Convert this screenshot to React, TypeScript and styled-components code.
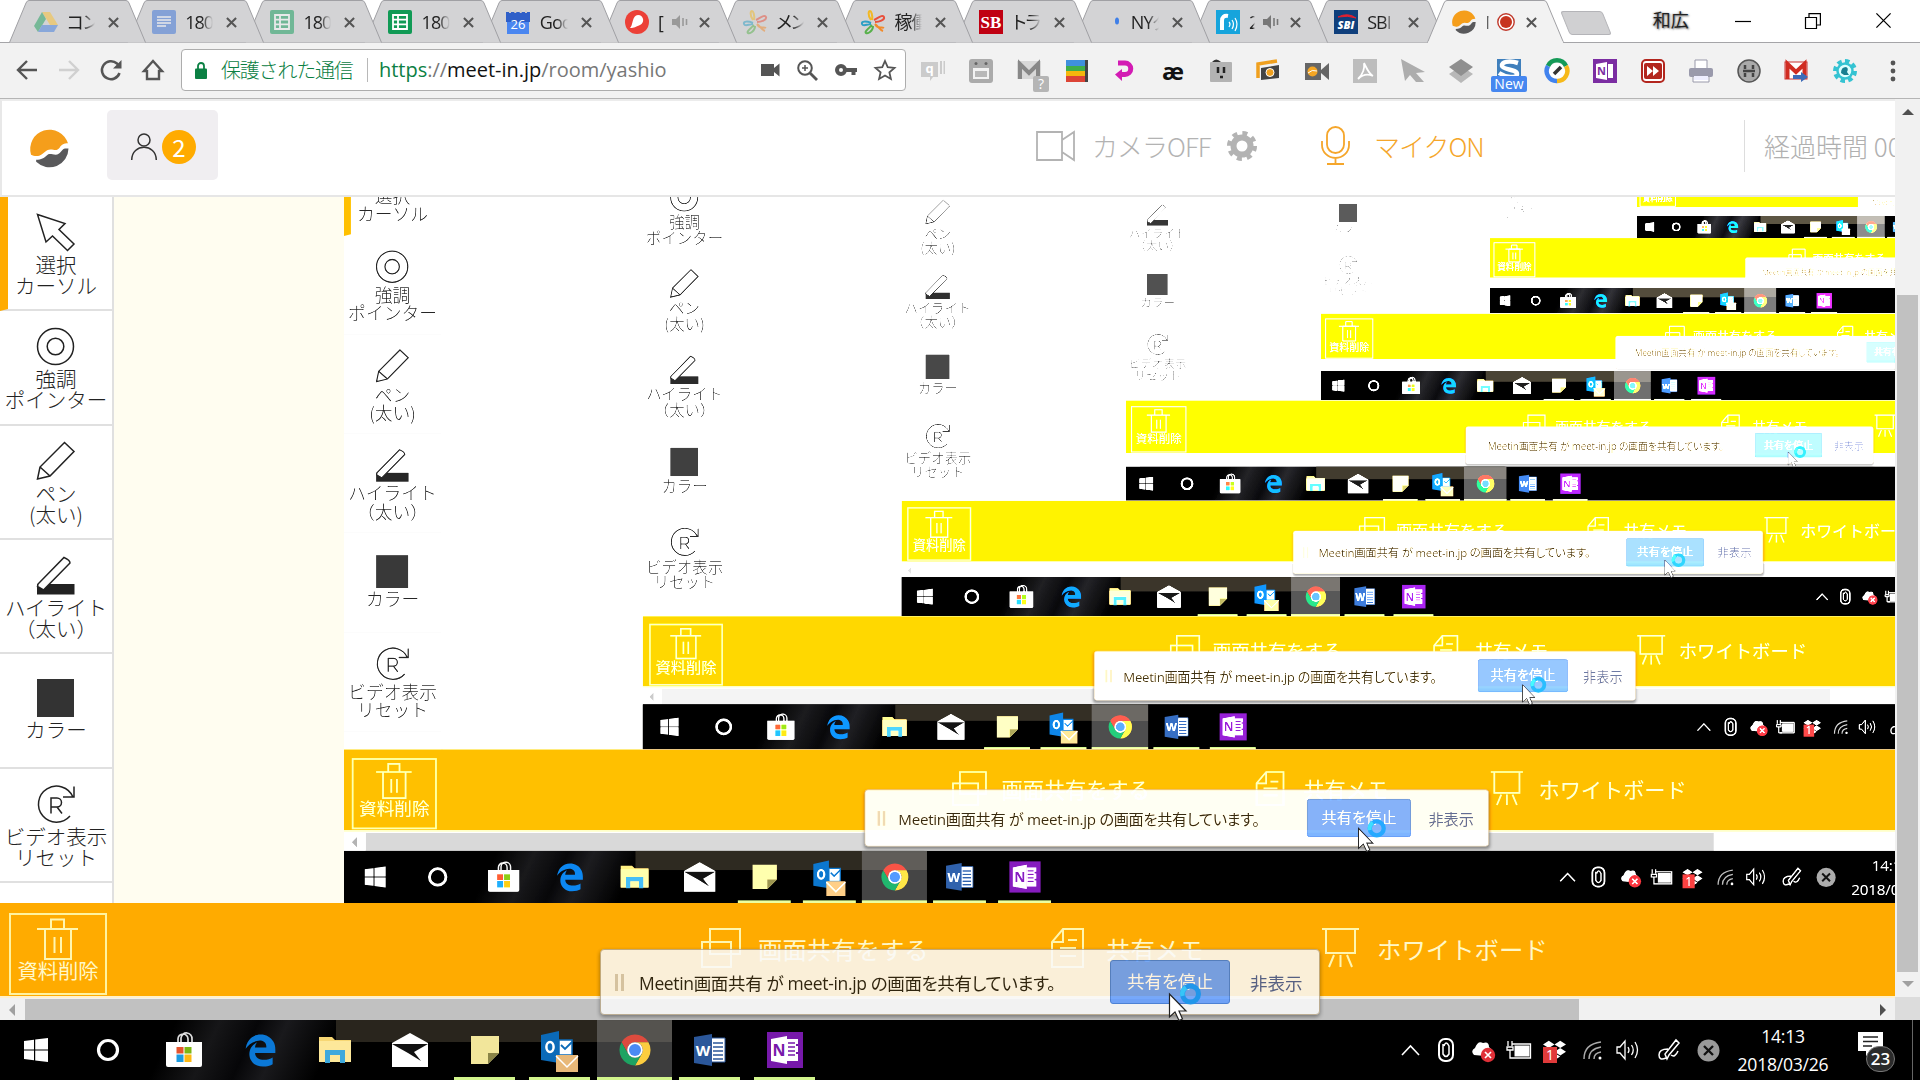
import React from "react";
import styled, { createGlobalStyle, css } from "styled-components";
import { FaEdgeLegacy, FaDropbox } from "react-icons/fa";

const JP = `"Noto Sans CJK JP", "Noto Sans", sans-serif`;
const UI = `"Open Sans", "Noto Sans CJK JP", sans-serif`;
const DEPTH = 7;
const SCALE = 0.8675;

const Global = createGlobalStyle`
  *, *::before, *::after { box-sizing: border-box; }
  html, body { margin: 0; padding: 0; background: #fff; overflow: hidden; }
  svg { display: block; flex: none; overflow: visible; }
`;

const Desktop = styled.div`
  position: relative;
  isolation: isolate;
  width: 1920px;
  height: 1080px;
  overflow: hidden;
  display: flex;
  flex-direction: column;
  background: #fff;
  font-family: ${JP};
  color: #222;
`;

/* ---------- browser tabs ---------- */
const TabStrip = styled.div`
  display: flex;
  height: 43px;
  padding-left: 9px;
  background: #fff;
  flex: none;
  border-bottom: 1px solid #a5a5a8;
`;
const TabBox = styled.div<{ $z: number }>`
  position: relative;
  z-index: ${(p) => p.$z};
  width: 137px;
  height: 43px;
  margin-right: -18.8px;
  flex: none;
  display: flex;
  align-items: center;
  padding: 1px 18px 0 24px;
`;
const TabShape = styled.svg`
  position: absolute;
  inset: 0;
  z-index: -1;
`;
const TabIcon = styled.div<{ $faded?: boolean }>`
  width: 25px;
  height: 24px;
  display: flex;
  justify-content: center;
  opacity: ${(p) => (p.$faded ? 0.5 : 1)};
`;
const TabTitle = styled.div<{ $w?: number }>`
  width: ${(p) => p.$w ?? 28}px;
  margin-left: 9px;
  overflow: hidden;
  white-space: nowrap;
  font: 18px/26px ${UI};
  letter-spacing: -1px;
  font-feature-settings: "palt";
  color: #222;
  mask-image: linear-gradient(90deg, #000 60%, transparent);
`;
const TabEnd = styled.div`
  margin-left: auto;
  display: flex;
  align-items: center;
  gap: 11px;
  padding-right: 9px;
`;
const NewTab = styled.div`
  width: 42px;
  height: 24px;
  margin: 11px 0 0 19px;
  background: #d0d0d2;
  border: 1px solid #b4b4b8;
  border-radius: 3px;
  transform: skewX(22deg);
`;
const Account = styled.div`
  margin-left: 46px;
  width: 38px;
  font: 18px/38px ${JP};
  color: #222;
  text-shadow: 1px 1px 2px #777, -1px 0 2px #aaa;
`;
const WindowButtons = styled.div`
  display: flex;
  align-items: center;
  gap: 54px;
  margin-left: 44px;
  height: 41px;
`;

/* ---------- browser toolbar ---------- */
const Toolbar = styled.div`
  display: flex;
  align-items: center;
  height: 56px;
  flex: none;
  background: #f2f2f2;
  border-bottom: 1px solid #b5b5b5;
`;
const NavGroup = styled.div`
  width: 181px;
  padding: 0 17px 2px 16px;
  display: flex;
  gap: 20px;
`;
const Omnibox = styled.div`
  width: 725px;
  height: 42px;
  margin-top: -1px;
  background: #fff;
  border: 1px solid #adadad;
  border-radius: 4px;
  display: flex;
  align-items: center;
  padding-left: 13px;
  font: 20px/38px ${UI};
`;
const Secure = styled.span`
  margin-left: 14px;
  width: 132px;
  font-family: ${JP};
  font-weight: 300;
  letter-spacing: -1.2px;
  font-size: 20px;
  white-space: nowrap;
  color: #0b8043;
`;
const Divider = styled.i`
  width: 1px;
  height: 24px;
  margin: 0 11px 0 14px;
  background: #b8b8b8;
`;
const Url = styled.span`
  width: 382px;
  flex: none;
  color: #777;
  white-space: nowrap;
  letter-spacing: -0.02px;
  b { font-weight: 400; color: #111; }
  em { font-style: normal; color: #0b8043; }
`;
const BoxIcons = styled.div`
  display: flex;
  align-items: center;
  gap: 17px;
`;
const Extensions = styled.div`
  display: flex;
  margin-left: 3px;
`;
const Ext = styled.div`
  width: 48px;
  height: 54px;
  display: flex;
  align-items: center;
  justify-content: center;
  position: relative;
`;
const Glyph = styled.span<{ $c?: string; $s?: number }>`
  font: 700 ${(p) => p.$s ?? 20}px/24px ${UI};
  color: ${(p) => p.$c ?? "#111"};
`;
const ExtBadge = styled.span<{ $bg: string; $wide?: boolean }>`
  position: absolute;
  left: ${(p) => (p.$wide ? 6 : 28)}px;
  top: 32px;
  width: ${(p) => (p.$wide ? 36 : 16)}px;
  height: 16px;
  border-radius: 2px;
  background: ${(p) => p.$bg};
  color: #fff;
  font: 14px/16px ${UI};
  text-align: center;
`;

/* ---------- page ---------- */
const Viewport = styled.div`
  display: flex;
  flex: none;
  height: 921px;
`;
const Page = styled.div`
  width: 1895px;
  flex: none;
  display: flex;
  flex-direction: column;
  overflow: hidden;
`;
const Header = styled.header`
  height: 98px;
  flex: none;
  display: flex;
  align-items: center;
  border-top: 2px solid #ececec;
  border-left: 2px solid #e8e8e8;
  border-bottom: 2px solid #e6e6e6;
  padding-left: 28px;
  white-space: nowrap;
`;
const Members = styled.div`
  width: 111px;
  height: 70px;
  flex: none;
  margin: -6px 0 0 38px;
  background: #f0eef1;
  border-radius: 5px;
  display: flex;
  align-items: center;
  padding: 4px 0 0 24px;
  gap: 5px;
`;
const Count = styled.span`
  width: 34px;
  height: 34px;
  border-radius: 50%;
  background: #ffab00;
  color: #fff;
  text-align: center;
  font: 24px/33px ${JP};
`;
const Status = styled.div`
  display: flex;
  flex: none;
  align-items: center;
  height: 60px;
  margin: -5px 0 0 818px;
`;
const HeaderText = styled.span<{ $c: string; $w: number; $ml: number; $ls?: number }>`
  margin-left: ${(p) => p.$ml}px;
  width: ${(p) => p.$w}px;
  flex: none;
  font: 300 26px/36px ${JP};
  letter-spacing: ${(p) => p.$ls ?? -1}px;
  color: ${(p) => p.$c};
`;
const MicIcon = styled.span`
  margin-left: 64px;
`;
const HeaderRule = styled.i`
  width: 1px;
  height: 52px;
  margin-left: 261px;
  background: #ddd;
`;
const AboveFold = styled.div<{ $h: number }>`
  height: ${(p) => p.$h}px;
  flex: none;
`;

const Workspace = styled.div`
  display: flex;
  height: 706px;
  flex: none;
`;
const Tools = styled.nav`
  width: 114px;
  flex: none;
  border-right: 2px solid #e0e0e0;
  background: #fff;
`;
const ToolCell = styled.div<{ $active?: boolean; $low?: boolean }>`
  height: 114.35px;
  border-bottom: 2px solid #e0e0e0;
  border-left: ${(p) => (p.$active ? "8px solid #ffab00" : "0 solid")};
  padding: ${(p) => (p.$low ? 25 : 16.5)}px ${(p) => (p.$active ? 8 : 0)}px 0 0;
  display: flex;
  flex-direction: column;
  align-items: center;
  font: 300 20.5px/21px ${JP};
  white-space: pre;
  text-align: center;
  span { margin-top: ${(p) => (p.$low ? 2 : 3)}px; }
`;
const Board = styled.div`
  width: 230px;
  flex: none;
  background: #fffdf0;
`;
const SharedVideo = styled.div`
  flex: 1;
  min-width: 0;
  overflow: hidden;
  background: #fff;
`;
const Mirror = styled.div<{ $soft: boolean }>`
  width: 1920px;
  height: 1080px;
  transform-origin: 0 0;
  transform: translateY(-230.9px) scale(${SCALE});
  filter: ${(p) => (p.$soft ? "blur(0.7px) " : "")}brightness(1.125);
`;

const ActionBar = styled.footer`
  height: 95px;
  flex: none;
  display: flex;
  background: #ffab00;
  border-bottom: 2px solid #fff1cc;
  color: #fff8c8;
  padding-left: 9px;
`;
const DeleteBox = styled.div`
  width: 98px;
  height: 82px;
  margin-top: 10px;
  border: 2px solid #fff3a0;
  display: flex;
  flex-direction: column;
  align-items: center;
  padding-top: 3px;
  font: 20.3px/20px ${JP};
`;
const Action = styled.div<{ $ml: number; $gap: number; $w: number }>`
  display: flex;
  margin-left: ${(p) => p.$ml}px;
  width: ${(p) => p.$w}px;
  flex: none;
  gap: ${(p) => p.$gap}px;
  padding-top: 25px;
  font: 24.4px/42px ${JP};
  white-space: nowrap;
`;

const HScroll = styled.div`
  height: 22px;
  flex: none;
  background: #f1f1f1;
  display: flex;
  align-items: center;
  padding: 1px 9px 0 9px;
`;
const HThumb = styled.div`
  width: 1554px;
  height: 21px;
  margin: 0 auto 0 10px;
  background: #c1c1c1;
`;
const VScroll = styled.div`
  flex: 1;
  background: #f1f1f1;
  display: flex;
  flex-direction: column;
  align-items: center;
`;
const VThumb = styled.div`
  width: 21px;
  height: 677px;
  margin: 180px 0 9px;
  background: #c1c1c1;
`;
const Corner = styled.div`
  width: 25px;
  height: 23px;
  margin-top: auto;
  background: #dcdcdc;
`;
const Arrow = styled.i<{ $dir: "up" | "down" | "left" | "right"; $c: string }>`
  width: 0;
  height: 0;
  flex: none;
  border: 6px solid transparent;
  ${(p) =>
    p.$dir === "up" ? css`border-bottom-color: ${p.$c}; border-top: 0; margin-top: 10px;`
    : p.$dir === "down" ? css`border-top-color: ${p.$c}; border-bottom: 0;`
    : p.$dir === "left" ? css`border-right-color: ${p.$c}; border-left: 0;`
    : css`border-left-color: ${p.$c}; border-right: 0;`}
`;

/* ---------- share notification ---------- */
const Toast = styled.div`
  position: absolute;
  left: 600px;
  top: 949px;
  width: 720px;
  height: 66px;
  opacity: 0.865;
  background: #fafafa;
  border: 1px solid #b9a98c;
  border-radius: 4px;
  box-shadow: 0 2px 4px rgba(0, 0, 0, 0.45);
  display: flex;
  align-items: center;
  padding-left: 14px;
  white-space: nowrap;
  font: 17.5px/24px ${UI};
  font-feature-settings: "palt";
`;
const Grip = styled.i`
  width: 9px;
  height: 17px;
  border: solid #cfc6b8;
  border-width: 0 3px;
`;
const ToastText = styled.span`
  margin-left: 15px;
  width: 471px;
  padding-top: 2px;
  letter-spacing: -0.35px;
  color: #111;
`;
const StopButton = styled.span`
  width: 120px;
  height: 44px;
  background: #639dff;
  border: 1px solid #3c78d8;
  border-radius: 3px;
  color: #fff;
  text-align: center;
  font-size: 17.5px;
  line-height: 41px;
`;
const Hide = styled.span`
  margin-left: 20px;
  padding-top: 2px;
  color: #3d5596;
`;
const Pointer = styled.svg`
  position: absolute;
  left: 1168px;
  top: 983px;
`;

/* ---------- task bar ---------- */
const Taskbar = styled.div`
  height: 60px;
  flex: none;
  display: flex;
  background:
    linear-gradient(#29251d, #29251d) 336px 0 / 333px 22px no-repeat,
    linear-gradient(115deg, #000 160px, #161618 200px, #060608 235px, #19191c 262px, #000 310px);
  background-color: #000;
`;
const TaskButton = styled.div<{ $w?: number; $open?: boolean; $active?: boolean }>`
  position: relative;
  width: ${(p) => p.$w ?? 75}px;
  flex: none;
  display: flex;
  align-items: center;
  justify-content: center;
  background: ${(p) => (p.$active ? "linear-gradient(#55534f 22px, #3d3d3d 22px)" : "none")};
  &::after {
    content: "";
    display: ${(p) => (p.$open ? "block" : "none")};
    position: absolute;
    bottom: 0;
    left: ${(p) => (p.$active ? 0 : 7)}px;
    right: ${(p) => (p.$active ? 0 : 7)}px;
    height: 3px;
    background: #d2f58c;
  }
`;
const Tray = styled.div`
  display: flex;
  align-items: center;
  margin-left: auto;
  width: 520px;
  flex: none;
  color: #fff;
`;
const TrayIcon = styled.span<{ $w: number }>`
  width: ${(p) => p.$w}px;
  flex: none;
  position: relative;
`;
const RedTag = styled.span`
  position: absolute;
  left: 0;
  top: 8px;
  width: 14px;
  height: 16px;
  background: #e03a3a;
  color: #fff;
  font: 14px/16px ${UI};
  text-align: center;
`;
const Clock = styled.div`
  width: 98px;
  margin-left: 13px;
  flex: none;
  text-align: center;
  font: 17.6px/28px ${UI};
  letter-spacing: -0.25px;
  white-space: nowrap;
`;
const Notices = styled.div`
  position: relative;
  width: 54px;
  height: 36px;
  margin-left: 26px;
`;
const NoticeCount = styled.span`
  position: absolute;
  left: 8px;
  top: 14px;
  width: 29px;
  height: 26px;
  border-radius: 13px;
  border: 1px solid #777;
  background: #2b2b2b;
  color: #fff;
  font: 600 17px/24px ${UI};
  text-align: center;
`;
const Peek = styled.i`
  width: 1px;
  align-self: stretch;
  background: #666;
`;

/* ---------- drawings ---------- */
const Close = ({ s = 11, w = 2.2, c = "#555" }) => (
  <svg width={s} height={s} viewBox="0 0 12 12"><path d="M1 1L11 11M11 1L1 11" stroke={c} strokeWidth={w} /></svg>
);
const Logo = ({ s }: { s: number }) => (
  <svg width={s} height={s} viewBox="0 0 38 38">
    <path d="M1 25A18.500 18.500 0 1 1 37 14C33 14 31 15 29 18C26 22 24 20 20 20C15 20 13 25 9 26C6 27 3 26 1 25Z" fill="#f59e1b" />
    <path d="M6 30C11 30 14 28 16 26C19 23 21 25 25 25C30 25 30 20 34 19L37.500 19A18.500 18.500 0 0 1 6 32Z" fill="#59595b" />
  </svg>
);
const Speaker = ({ c = "#777", s = 16 }) => (
  <svg width={s} height={s} viewBox="0 0 16 16"><path d="M0 5H4L8 1V15L4 11H0Z" fill={c} /><path d="M11 4V12M14.500 5V11" stroke={c} strokeWidth="1.600" /></svg>
);
const Sheet = ({ c, grid }: { c: string; grid?: boolean }) => (
  <svg width="24" height="24" viewBox="0 0 24 24">
    <rect width="24" height="24" rx="2" fill={c} />
    {grid ? (
      <path d="M5 5H19V19H5ZM5 9.600H19M5 14.300H19M10 5V19" fill="none" stroke="#fff" strokeWidth="1.800" />
    ) : (
      <path d="M5 7H19M5 10H19M5 13H19M5 16H14" stroke="#fff" strokeWidth="1.700" />
    )}
  </svg>
);
const Spark = () => (
  <svg width="24" height="24" viewBox="0 0 24 24" fill="none" strokeWidth="2">
    <path d="M10 10C6 4 8 1 9 1S12 5 11 10" stroke="#f2b824" />
    <path d="M13 10C17 8 22 4 23 7S18 12 14 12" stroke="#e8503c" />
    <path d="M14 14C17 16 19 20 22 21M14 14C17 20 20 16 23 18" stroke="#f28a2a" />
    <path d="M11 15C8 18 3 22 5 23S12 21 12 16" stroke="#57b04a" />
    <path d="M10 13C5 11 0 11 1 14S6 14 10 14" stroke="#2b9fc4" />
  </svg>
);
const Letters = ({ bg, t, font = UI, size = 14, c = "#fff" }: { bg: string; t: string; font?: string; size?: number; c?: string }) => (
  <svg width="24" height="24" viewBox="0 0 24 24">
    <rect width="24" height="24" fill={bg} />
    <text x="12" y="18" textAnchor="middle" fontFamily={font} fontSize={size} fontWeight="700" fill={c}>{t}</text>
  </svg>
);
const Calendar = () => (
  <svg width="24" height="24" viewBox="0 0 24 24">
    <path d="M1 3H23V24H1Z" fill="#4a86f0" /><path d="M0 2H24V12H0Z" fill="#2f5fc8" />
    <path d="M4 0V3M9.300 0V3M14.700 0V3M20 0V3" stroke="#ccc" strokeWidth="2" />
    <text x="12" y="18.500" textAnchor="middle" fontFamily={UI} fontSize="13" fill="#fff">26</text>
  </svg>
);
const Drive = () => (
  <svg width="24" height="24" viewBox="0 0 24 24"><path d="M8 2H16L24 15H16Z" fill="#fbc02d" /><path d="M8 2L0 16L4 22L12 9Z" fill="#1b9e5a" /><path d="M8 15H24L20 22H4Z" fill="#3f7de0" /></svg>
);

const tabs: { icon: React.ReactNode; title: string; faded?: boolean; extra?: React.ReactNode; w?: number }[] = [
  { icon: <Drive />, title: "コンテ", faded: true },
  { icon: <Sheet c="#3871d8" />, title: "1803", faded: true },
  { icon: <Sheet c="#0f9d58" grid />, title: "1803", faded: true },
  { icon: <Sheet c="#109a55" grid />, title: "1803" },
  { icon: <Calendar />, title: "Goog" },
  {
    icon: <svg width="24" height="24" viewBox="0 0 24 24"><circle cx="12" cy="12" r="12" fill="#ec4037" /><path d="M5 18C8 16 7 5 13 5S20 13 15 15S10 18 5 18Z" fill="#fff" /></svg>,
    title: "[", extra: <Speaker c="#999" />, w: 8,
  },
  { icon: <Spark />, title: "メンバ", faded: true },
  { icon: <Spark />, title: "稼働" },
  { icon: <Letters bg="#c00012" t="SB" font={`"Liberation Serif", serif`} size={17} />, title: "トラン" },
  { icon: <svg width="24" height="24"><ellipse cx="20" cy="11" rx="2" ry="3.500" fill="#3f7fe8" /></svg>, title: "NYダ" },
  {
    icon: <svg width="24" height="24" viewBox="0 0 24 24"><rect width="24" height="24" fill="#16a4dc" /><path d="M6 20V11Q6 5 12 6" stroke="#fff" strokeWidth="4" fill="none" /><path d="M13 12Q15 14 13 17M16 10Q19 14 16 19M19 8Q23 14 19 21" stroke="#fff" strokeWidth="1.200" fill="none" /></svg>,
    title: "2", extra: <Speaker c="#777" />, w: 6,
  },
  { icon: <svg width="24" height="24" viewBox="0 0 24 24"><rect width="24" height="24" fill="#0f3f7c" /><path d="M4 7Q14 2 22 8Q14 5 4 7Z" fill="#e02030" stroke="#e02030" /><text x="12" y="19" textAnchor="middle" fontFamily={UI} fontSize="11" fontWeight="800" fontStyle="italic" fill="#fff">SBI</text></svg>, title: "SBI" },
  {
    icon: <Logo s={24} />, title: "M", w: 4,
    extra: <svg width="18" height="18" viewBox="0 0 18 18"><circle cx="9" cy="9" r="8.200" fill="#fff" stroke="#c0392b" strokeWidth="1.400" /><circle cx="9" cy="9" r="6" fill="#c7341f" /></svg>,
  },
];

const Browser = () => (
  <>
    <TabStrip>
      {tabs.map((t, i) => {
        const active = i === tabs.length - 1;
        return (
          <TabBox key={i} $z={active ? 30 : 20 - i}>
            <TabShape width="137" height="43">
              <path d="M0.500 42.500L17 3Q18 0.500 20 0.500H117Q119 0.500 120 3L136.500 42.500" fill={active ? "#f2f2f2" : "#d3d3d5"} stroke="#a0a0a4" />
              {active && <path d="M1 42.500H136" stroke="#f2f2f2" strokeWidth="2" />}
            </TabShape>
            <TabIcon $faded={t.faded}>{t.icon}</TabIcon>
            <TabTitle $w={t.w}>{t.title}</TabTitle>
            <TabEnd>{t.extra}<Close /></TabEnd>
          </TabBox>
        );
      })}
      <NewTab />
      <Account>和広</Account>
      <WindowButtons>
        <svg width="16" height="16"><path d="M0 8.500H16" stroke="#000" strokeWidth="1.200" /></svg>
        <svg width="16" height="16" fill="none" stroke="#000" strokeWidth="1.200"><path d="M0.500 4.500H11.500V15.500H0.500ZM4 4V0.600H15.400V12H12" /></svg>
        <Close s={17} w={0.9} c="#000" />
      </WindowButtons>
    </TabStrip>
    <Toolbar>
      <NavGroup>
        <svg width="22" height="22" viewBox="0 0 22 22" fill="none" stroke="#555" strokeWidth="2.400"><path d="M21 11H3M11 2L2 11L11 20" /></svg>
        <svg width="22" height="22" viewBox="0 0 22 22" fill="none" stroke="#d0d0d0" strokeWidth="2.400"><path d="M1 11H19M11 2L20 11L11 20" /></svg>
        <svg width="22" height="22" viewBox="0 0 22 22" fill="none" stroke="#555" strokeWidth="2.500"><path d="M19.500 14A9 9 0 1 1 17 4.500L20 8" /><path d="M21.500 1V9.500H13Z" fill="#555" stroke="none" /></svg>
        <svg width="22" height="22" viewBox="0 0 22 22" fill="none" stroke="#555" strokeWidth="2.400"><path d="M11 2L2 12H5V20H17V12H20Z" /></svg>
      </NavGroup>
      <Omnibox>
        <svg width="12" height="17" viewBox="0 0 12 17"><rect y="6.500" width="12" height="10.500" rx="1" fill="#0b8043" /><path d="M3 7V4A3 3 0 0 1 9 4V7" fill="none" stroke="#0b8043" strokeWidth="1.800" /></svg>
        <Secure>保護された通信</Secure>
        <Divider />
        <Url><em>https</em>://<b>meet-in.jp</b>/room/yashio</Url>
        <BoxIcons>
          <svg width="19" height="14" viewBox="0 0 19 14" fill="#555"><path d="M0 1H13V5L18.500 0.500V13.500L13 9V13H0Z" /></svg>
          <svg width="21" height="21" viewBox="0 0 21 21" fill="none" stroke="#555" strokeWidth="2"><circle cx="8" cy="8" r="6.800" /><path d="M13 13L20 20" strokeWidth="2.800" /><path d="M8 5V11M5 8H11" strokeWidth="1.500" /></svg>
          <svg width="22" height="14" viewBox="0 0 22 14" fill="none" stroke="#555"><circle cx="6" cy="7" r="4" strokeWidth="4" /><path d="M10 7H22M18.500 7V12" strokeWidth="4" /></svg>
          <svg width="22" height="22" viewBox="0 0 22 22" fill="none" stroke="#555" strokeWidth="1.800"><path d="M11 2L13.700 8.200L20.500 8.900L15.400 13.400L16.900 20L11 16.500L5.100 20L6.600 13.400L1.500 8.900L8.300 8.200Z" /></svg>
        </BoxIcons>
      </Omnibox>
      <Extensions>
        <Ext><svg width="24" height="24"><path d="M0 3H17V18H12L9 22V18H0ZM19 2H21V15H19ZM22.500 2H24V15H22.500Z" fill="#cbcbcb" /><text x="8.500" y="14" textAnchor="middle" fontFamily={UI} fontSize="13" fontWeight="700" fill="#fff">q</text></svg></Ext>
        <Ext><svg width="24" height="24"><rect width="24" height="24" rx="3" fill="#ababab" /><path d="M4 9H20V20H4Z" fill="#f2f2f2" /><path d="M6 12H18V18H6Z" fill="#b8b8b8" /><circle cx="7" cy="4.500" r="1.500" fill="#666" /><circle cx="17" cy="4.500" r="1.500" fill="#666" /></svg></Ext>
        <Ext><svg width="24" height="20"><rect width="24" height="18" fill="#d8d8d8" /><path d="M3 18V3L12 12L21 3V18" stroke="#888" strokeWidth="4" fill="none" /></svg><ExtBadge $bg="#b5b5b5">?</ExtBadge></Ext>
        <Ext><svg width="24" height="22"><path d="M1 0H20V6H1Z" fill="#3f90dc" /><path d="M1 6H20V11H1Z" fill="#3fae49" /><path d="M1 11H20V16H1Z" fill="#f5b70c" /><path d="M1 16H20V22H1Z" fill="#dc4436" /><path d="M20 0H23V22H20Z" fill="#444" /></svg></Ext>
        <Ext><svg width="22" height="22" fill="none" stroke="#d31bb4" strokeWidth="5"><path d="M4 3H11A5.500 5.500 0 0 1 11 14.500H6" /><path d="M8 9V21L1 14.500Z" fill="#d31bb4" stroke="none" /></svg></Ext>
        <Ext><Glyph $s={24}>æ</Glyph></Ext>
        <Ext><svg width="22" height="24"><rect y="3" width="22" height="20" rx="1" fill="#b3b3b3" /><path d="M2 3Q6 -2 11 3Z" fill="#333" /><path d="M8 8V14M14 8V14M10 18H13" stroke="#222" strokeWidth="2.500" /></svg></Ext>
        <Ext><svg width="24" height="22"><path d="M1 18V4L20 1" stroke="#f0a01e" strokeWidth="3.500" fill="none" /><path d="M4 8L22 5V18L4 20Z" fill="#444" /><circle cx="13" cy="12.500" r="4" fill="#f0a01e" stroke="#fff" /></svg></Ext>
        <Ext><svg width="24" height="20"><rect y="2" width="16" height="17" fill="#666" /><path d="M16 9L24 2V19L16 12Z" fill="#666" /><circle cx="7.500" cy="10.500" r="5" fill="#f5a623" /><path d="M3 12Q7 8 12 10" stroke="#fff" fill="none" /></svg></Ext>
        <Ext><svg width="24" height="24"><rect width="24" height="24" fill="#bdbdbd" /><path d="M11 4C14 10 16 15 20 17C14 14 9 16 5 20C9 16 12 10 11 4" fill="none" stroke="#fff" strokeWidth="1.800" /></svg></Ext>
        <Ext><svg width="24" height="24"><path d="M0 0L24 13L15 14L23 23H15L9 16L4 22Z" fill="#adadad" /></svg></Ext>
        <Ext><svg width="24" height="24"><path d="M12 7L24 15L12 24L0 15Z" fill="#b8b8b8" /><path d="M12 0L24 8L12 17L0 8Z" fill="#8f8f8f" /></svg></Ext>
        <Ext><svg width="24" height="24"><rect width="24" height="20" fill="#3f7fbc" /><path d="M21 4C12 1 4 3 5 7S20 10 20 15S8 18 2 14" fill="none" stroke="#fff" strokeWidth="4.500" /></svg><ExtBadge $bg="#4687f0" $wide>New</ExtBadge></Ext>
        <Ext><svg width="24" height="24" fill="none" strokeWidth="4.500"><circle cx="12" cy="12" r="8" fill="#fff" stroke="none" /><path d="M3 7A10 10 0 0 1 21 7" stroke="#159a57" /><path d="M21 7A10 10 0 0 1 12 22" stroke="#f6b91a" /><path d="M12 22A10 10 0 0 1 3 7" stroke="#4283ee" /><path d="M9 15L16 8" stroke="#333" strokeWidth="3.500" /></svg></Ext>
        <Ext><svg width="24" height="24"><rect width="24" height="24" fill="#7b2da2" /><path d="M3 5L14 3V21L3 19ZM15 5H20V19H15Z" fill="#fff" /><text x="8.500" y="16" textAnchor="middle" fontFamily={UI} fontSize="11" fontWeight="700" fill="#7b2da2">N</text></svg></Ext>
        <Ext><svg width="24" height="24"><rect x="1" y="1" width="22" height="22" rx="4" fill="#fff" stroke="#b3261e" strokeWidth="2" /><rect x="3" y="4" width="18" height="16" rx="2" fill="#b3261e" /><path d="M6 7L12 12L6 17ZM12 7L18 12L12 17Z" fill="#fff" /></svg></Ext>
        <Ext><svg width="24" height="24"><path d="M6 1H18V11H6ZM4 16H20V23H4Z" fill="#fff" stroke="#99a" /><rect y="9" width="24" height="9" rx="2" fill="#9a9aac" /><path d="M5 17H19V21H5Z" fill="#eef" /></svg></Ext>
        <Ext><svg width="24" height="24"><circle cx="12" cy="12" r="11" fill="#aaa" stroke="#555" strokeWidth="1.500" /><path d="M8 6V10M16 6V10M8 14V18M16 14V18M6 12H18" stroke="#444" strokeWidth="2.500" /></svg></Ext>
        <Ext><svg width="24" height="22"><rect y="2" width="22" height="17" fill="#fff" stroke="#c33" /><path d="M2.500 19V4L11 12L19.500 4V19" stroke="#d02c22" strokeWidth="4" fill="none" /><path d="M8 15H16V12L23 17L16 22V19H8Z" fill="#3d6bb8" /></svg></Ext>
        <Ext><svg width="24" height="24"><circle cx="12" cy="12" r="10" fill="none" stroke="#35c3d2" strokeWidth="4" strokeDasharray="4.500 3.300" /><circle cx="12" cy="12" r="7.500" fill="#dff" stroke="#35c3d2" strokeWidth="2.500" /><path d="M8 14Q8 8 13 8Q16 9 14 13L16 16H11Z" fill="#187f91" /></svg></Ext>
        <Ext><svg width="6" height="22" fill="#555"><circle cx="3" cy="3" r="2.400" /><circle cx="3" cy="11" r="2.400" /><circle cx="3" cy="19" r="2.400" /></svg></Ext>
      </Extensions>
    </Toolbar>
  </>
);

const line = { fill: "none", stroke: "#222", strokeWidth: 1.5 };
const tools: { art: React.ReactNode; label: string; low?: boolean }[] = [
  { label: "選択\nカーソル", art: <path d="M0.500 0.500L28 9.500L22 15.500L37 30L30.500 36.500L15.500 22L9 28Z" /> },
  { label: "強調\nポインター", art: <><circle cx="18.500" cy="18.500" r="18" /><circle cx="18.500" cy="18.500" r="8.300" /></> },
  { label: "ペン\n(太い)", art: <path d="M27.500 0.500L37 9.500L13 34L0.500 37L3 25ZM3 25L13 34" /> },
  { label: "ハイライト\n（太い）", art: <><path d="M0 27H37.500V37.500H0Z" fill="#222" stroke="none" /><path d="M27 0.500Q33 3 33 6L6.500 33L0.500 29.500L1 27Z" fill="#fff" /></> },
  { label: "カラー", low: true, art: <rect width="37" height="38" fill="#333" stroke="none" /> },
  { label: "ビデオ表示\nリセット", art: <><path d="M33 31A18 18 0 1 1 36 12M26 12H37V1.500M14 28.500V13H20A4.500 4.500 0 0 1 20 22H14M20 22L25 28.500" /></> },
];

const ivory = { fill: "none", stroke: "#fff6b0", strokeWidth: 2 };

const PageHeader = () => (
  <Header>
    <Logo s={39} />
    <Members>
      <svg width="26" height="28" viewBox="0 0 26 28" fill="none" stroke="#333" strokeWidth="1.500"><circle cx="13" cy="7" r="6" /><path d="M0.700 27C0.700 10 25.300 10 25.300 27" /></svg>
      <Count>2</Count>
    </Members>
    <Status>
      <svg width="39" height="30" fill="none" stroke="#b3b3b3" strokeWidth="1.800"><path d="M1 1H26V29H1ZM26 9L38 1V29L26 21" /></svg>
      <HeaderText $c="#b3b3b3" $ml={17} $w={135}>カメラOFF</HeaderText>
      <svg width="30" height="30" viewBox="0 0 30 30" fill="none" stroke="#b3b3b3"><circle cx="15" cy="15" r="8.500" strokeWidth="6" /><circle cx="15" cy="15" r="12.800" strokeWidth="4.500" strokeDasharray="5 5.050" /></svg>
      <MicIcon><svg width="29" height="39" viewBox="0 0 29 39" fill="none" stroke="#f5a62b" strokeWidth="1.800"><rect x="6" y="1" width="17" height="26" rx="8.500" /><path d="M1 15V19A13.500 13 0 0 0 28 19V15M14.500 32V38M6 38H23" /></svg></MicIcon>
      <HeaderText $c="#f5a62b" $ml={24} $w={109}>マイクON</HeaderText>
      <HeaderRule />
      <HeaderText $c="#b0b0b0" $ml={19} $w={180} $ls={0}>経過時間 00:12</HeaderText>
    </Status>
  </Header>
);

const Chrome = () => (
  <svg width="34" height="34" viewBox="0 0 48 48">
    <path d="M5 13A22 22 0 0 1 43 13H24A11 11 0 0 0 14.500 29.500Z" fill="#dd4b3e" />
    <path d="M43 13A22 22 0 0 1 24 46L33.500 29.500A11 11 0 0 0 24 13Z" fill="#fccd3f" />
    <path d="M24 46A22 22 0 0 1 5 13L14.500 29.500A11 11 0 0 0 33.500 29.500Z" fill="#1da362" />
    <circle cx="24" cy="24" r="11" fill="#fff" /><circle cx="24" cy="24" r="8.500" fill="#4a8af4" />
  </svg>
);

const Tasks = () => (
  <Taskbar>
    <TaskButton $w={72}><svg width="24" height="24" viewBox="0 0 24 24" fill="#fff"><path d="M0 3L10 1.800V11.400H0ZM11.200 1.600L24 0V11.400H11.200ZM0 12.600H10V22.200L0 21ZM11.200 12.600H24V24L11.200 22.400Z" /></svg></TaskButton>
    <TaskButton $w={72}><svg width="24" height="24"><circle cx="12" cy="12" r="9.500" fill="none" stroke="#fff" strokeWidth="3.200" /></svg></TaskButton>
    <TaskButton $w={79}><svg width="36" height="34" viewBox="0 0 36 34"><path d="M12 10V6A5 5 0 0 1 22 6V10M15 10V5A5 5 0 0 1 26 6V10" stroke="#ddd" strokeWidth="1.700" fill="none" /><path d="M0 9H36V32Q36 34 34 34H2Q0 34 0 32Z" fill="#fff" /><path d="M10.500 14H17.500V20.500H10.500Z" fill="#e5532d" /><path d="M18.500 14H25.500V20.500H18.500Z" fill="#7db713" /><path d="M10.500 21.500H17.500V29H10.500Z" fill="#1c9be0" /><path d="M18.500 21.500H25.500V29H18.500Z" fill="#fdb813" /></svg></TaskButton>
    <TaskButton $w={74}><FaEdgeLegacy size={33} color="#0b78d6" /></TaskButton>
    <TaskButton><svg width="32" height="26" viewBox="0 0 32 26"><path d="M0 0H13L16 3H32V25H0Z" fill="#f7d774" /><path d="M0 4H32V25H0Z" fill="#fde89a" /><path d="M6 26V13H26V26H21V18H11V26Z" fill="#3ea9dc" /></svg></TaskButton>
    <TaskButton><svg width="36" height="36" viewBox="0 0 36 36"><path d="M0 11L18 1L36 11V35H0Z" fill="#fff" /><path d="M0 12H36L22 20L29 29L16 21Z" fill="#111" /></svg></TaskButton>
    <TaskButton $open><svg width="28" height="28" viewBox="0 0 28 28"><path d="M0 0H28V17L17 28H0Z" fill="#f2e69b" /><path d="M17 28V17H28Z" fill="#8a8447" /></svg></TaskButton>
    <TaskButton $open><svg width="38" height="38" viewBox="0 0 38 38"><path d="M0 4L18 0V32L0 29Z" fill="#0b6ab8" /><ellipse cx="9" cy="16" rx="3.600" ry="5" fill="none" stroke="#fff" strokeWidth="2.500" /><path d="M18 9H31V24H18Z" fill="#fff" stroke="#0b6ab8" strokeWidth="1.500" /><path d="M20 14L24 18L31 11" fill="none" stroke="#0b6ab8" strokeWidth="1.800" /><path d="M15 24H37V41H15Z" fill="#e8b878" /><path d="M15 25L26 36L37 25" stroke="#fff" strokeWidth="1.500" fill="none" /></svg></TaskButton>
    <TaskButton $open $active><Chrome /></TaskButton>
    <TaskButton $open><svg width="32" height="36" viewBox="0 -2 32 36"><path d="M14 4H31V28H14Z" fill="#fff" stroke="#2b579a" /><path d="M19 9H29M19 13H29M19 17H29M19 21H29M19 25H29" stroke="#2b579a" strokeWidth="1.700" /><path d="M0 3L18 0V32L0 29Z" fill="#2b579a" /><text x="9" y="22" textAnchor="middle" fontFamily={UI} fontSize="15" fontWeight="700" fill="#fff">W</text></svg></TaskButton>
    <TaskButton $open><svg width="36" height="36" viewBox="0 0 36 36"><rect width="36" height="36" fill="#7719aa" /><path d="M20 7H31V12H29V14H31V20H29V22H31V29H20Z" fill="#fff" /><path d="M21 11H28M21 15H28M21 19H28M21 23H28" stroke="#7719aa" strokeWidth="1.500" /><path d="M4 7L20 4V32L4 29Z" fill="#fff" /><text x="12" y="24" textAnchor="middle" fontFamily={UI} fontSize="16" fontWeight="700" fill="#7719aa">N</text></svg></TaskButton>
    <Tray>
      <TrayIcon $w={38}><svg width="20" height="12" fill="none" stroke="#fff" strokeWidth="1.600"><path d="M2 11L10.500 2L19 11" /></svg></TrayIcon>
      <TrayIcon $w={33}><svg width="16" height="24" fill="none" stroke="#fff"><rect x="1" y="1" width="14" height="22" rx="6" strokeWidth="2" /><path d="M5 6V16Q8 21 11 16V8Q8 2 6 8" strokeWidth="1.500" /></svg></TrayIcon>
      <TrayIcon $w={36}><svg width="25" height="24"><path d="M3 17Q-1 13 4 10Q7 2 12 5Q18 3 18 9L22 13L14 18Z" fill="#fff" /><circle cx="17" cy="17" r="7.200" fill="#e03038" /><path d="M14 14L20 20M20 14L14 20" stroke="#fff" strokeWidth="1.700" /></svg></TrayIcon>
      <TrayIcon $w={36}><svg width="24" height="20"><path d="M7 5H23V17H7Z" fill="#fff" stroke="#000" /><path d="M5 4H23.500V18H5M1 1V6M5 1V6M0 7H6V10H0ZM3 10V18H7" fill="none" stroke="#fff" strokeWidth="1.300" /></svg></TrayIcon>
      <TrayIcon $w={40}><FaDropbox size={23} color="#fff" /><RedTag>1</RedTag></TrayIcon>
      <TrayIcon $w={33}><svg width="20" height="20" fill="none" stroke="#aaa" strokeWidth="1.500"><path d="M1 19Q1 4 18 2M6 19Q6 9 18 7M11 19Q11 13 18 12" /><circle cx="17" cy="18" r="1.500" fill="#fff" stroke="none" /></svg></TrayIcon>
      <TrayIcon $w={42}><svg width="24" height="20" fill="none" stroke="#fff" strokeWidth="1.300"><path d="M1 7H4L9 1V19L4 13H1ZM12 7Q14 10 12 13M15.500 5Q19 10 15.500 15M19 2Q24 10 19 18" /></svg></TrayIcon>
      <TrayIcon $w={39}><svg width="22" height="24" fill="none" stroke="#fff" strokeWidth="1.500"><path d="M9 21L7 16L18 2L21 5L11 17ZM10 11Q1 11 1 17T8 20M13 17Q17 20 20 13" /></svg></TrayIcon>
      <TrayIcon $w={24}><svg width="23" height="23"><circle cx="11.500" cy="11.500" r="11" fill="#999" /><path d="M7 7L16 16M16 7L7 16" stroke="#111" strokeWidth="2.300" /></svg></TrayIcon>
      <Clock>14:13<br />2018/03/26</Clock>
      <Notices>
        <svg width="25" height="24" viewBox="0 0 25 24"><path d="M0 0H25V19H14L8 24V19H0Z" fill="#fff" /><path d="M5 5H20M5 9.500H20M5 14H14" stroke="#222" strokeWidth="1.500" /></svg>
        <NoticeCount>23</NoticeCount>
      </Notices>
      <Peek />
    </Tray>
  </Taskbar>
);

const Screen = ({ level }: { level: number }) => (
  <Desktop>
    {level === 0 ? <Browser /> : <AboveFold $h={99} />}
    <Viewport>
      <Page>
        {level === 0 ? <PageHeader /> : <AboveFold $h={98} />}
        <Workspace>
          <Tools>
            {tools.map((t, i) => (
              <ToolCell key={t.label} $active={i === 0} $low={t.low}>
                <svg width="37.500" height="37.500" {...line}>{t.art}</svg>
                <span>{t.label}</span>
              </ToolCell>
            ))}
          </Tools>
          <Board />
          <SharedVideo>
            {level < DEPTH && (
              <Mirror $soft={level >= 2}>
                <Screen level={level + 1} />
              </Mirror>
            )}
          </SharedVideo>
        </Workspace>
        <ActionBar>
          <DeleteBox>
            <svg width="42" height="42" {...ivory}><path d="M14 11V1.500H27V11M0 11H41M8 11H34V41H8ZM17.500 19V35M24 19V35" /></svg>
            資料削除
          </DeleteBox>
          <Action $ml={594} $gap={17} $w={350}>
            <svg width="40" height="40" {...ivory}><path d="M9 1H39V26H9ZM1 14H30V39H1Z" /></svg>画面共有をする
          </Action>
          <Action $ml={0} $gap={22} $w={271}>
            <svg width="33" height="40" {...ivory}><path d="M12 1H32V39H1V14ZM12 1V14H1M17 12H26M9 20H25M9 28H25" /></svg>共有メモ
          </Action>
          <Action $ml={0} $gap={18} $w={240}>
            <svg width="37" height="40" {...ivory}><path d="M0 1H37M4 1V25H33V1M12 27L7 39M18.500 27V39M25 27L30 39" /></svg>ホワイトボード
          </Action>
        </ActionBar>
        <HScroll>
          <Arrow $dir="left" $c="#a0a0a0" />
          <HThumb />
          <Arrow $dir="right" $c="#505050" />
        </HScroll>
      </Page>
      <VScroll>
        <Arrow $dir="up" $c="#505050" />
        <VThumb />
        <Arrow $dir="down" $c="#a0a0a0" />
        <Corner />
      </VScroll>
    </Viewport>
    <Tasks />
    <Toast>
      <Grip />
      <ToastText>Meetin画面共有 が meet-in.jp の画面を共有しています。</ToastText>
      <StopButton>共有を停止</StopButton>
      <Hide>非表示</Hide>
    </Toast>
    <Pointer width="36" height="38">
      <circle cx="22.500" cy="11" r="8" fill="none" stroke="#2196ea" strokeWidth="5" />
      <path d="M14.500 13A8 8 0 0 1 18 4.500" fill="none" stroke="#36c5f8" strokeWidth="4.500" />
      <path d="M1.500 11V34L7 29L11 37.500L14.500 36L11 28H18Z" fill="#fff" stroke="#222" strokeWidth="1.200" />
    </Pointer>
  </Desktop>
);

export default function App() {
  return (
    <>
      <Global />
      <Screen level={0} />
    </>
  );
}
